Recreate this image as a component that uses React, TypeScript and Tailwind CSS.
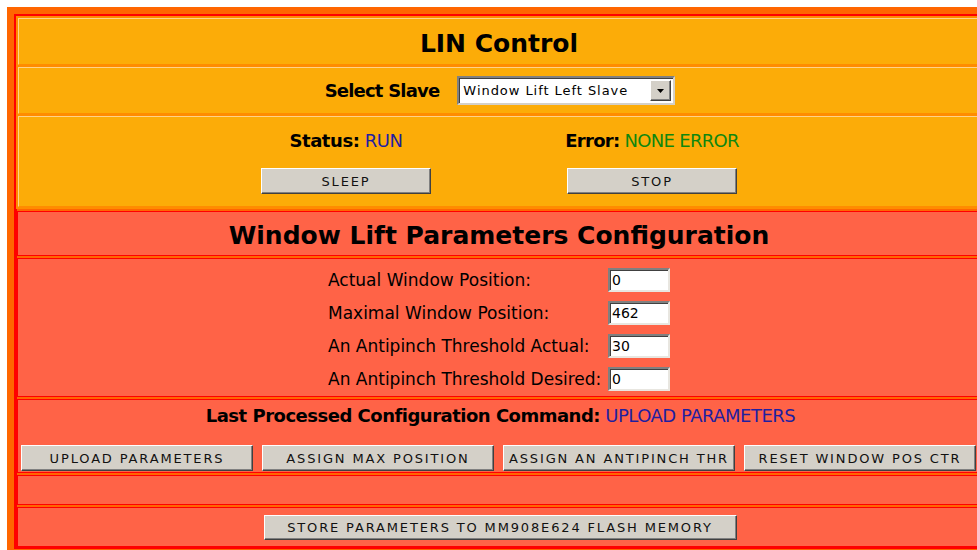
import type { ReactNode } from "react"

const slaves = ["Window Lift Left Slave", "Window Lift Right Slave"]

const params = [
  { label: "Actual Window Position:", value: "0" },
  { label: "Maximal Window Position:", value: "462" },
  { label: "An Antipinch Threshold Actual:", value: "30" },
  { label: "An Antipinch Threshold Desired:", value: "0" },
]

const commands = ["UPLOAD PARAMETERS", "ASSIGN MAX POSITION", "ASSIGN AN ANTIPINCH THR", "RESET WINDOW POS CTR"]

function Button({ children, className = "" }: { children: ReactNode; className?: string }) {
  return (
    <button
      className={`flex items-center justify-center px-0 whitespace-nowrap bg-[#D4D0C8] border border-t-white border-l-white border-r-[#404040] border-b-[#404040] shadow-[inset_-1px_-1px_0_#808080] text-[13px] tracking-[1.85px] text-[#111] leading-none ${className}`}
    >
      {children}
    </button>
  )
}

function Field({ value }: { value: string }) {
  return (
    <div className="w-[62px] h-[24px] bg-white border-2 border-t-[#808080] border-l-[#808080] border-b-[#E8E6E0] border-r-[#E8E6E0] shadow-[inset_1px_1px_0_#404040] flex items-center pl-[2px] text-[14px] leading-none">
      {value}
    </div>
  )
}

function YellowRow({ children, className = "" }: { children: ReactNode; className?: string }) {
  return (
    <div
      className={`bg-[#FCAC08] border border-t-[#FFD28A] border-l-[#FFD28A] border-b-[#FF8C00] border-r-[#FF8C00] ${className}`}
    >
      {children}
    </div>
  )
}

function RedRow({ children, className = "" }: { children: ReactNode; className?: string }) {
  return (
    <div className="border-t-2 border-[#FF6600]">
      <div className={`bg-[#FF6347] border border-[#FF0000] ${className}`}>{children}</div>
    </div>
  )
}

export default function App() {
  return (
    <div className="w-[977px] h-[550px] overflow-hidden bg-white pt-[7px] pl-[7px] font-['DejaVu_Sans',sans-serif] text-black">
      <div className="w-[984px] border-[7px] border-[#FF6600] bg-[#FF0000] p-[2px]">
        {/* LIN master controls */}
        <div className="bg-[#FF8C00] p-[2px] flex flex-col gap-[2px]">
          <YellowRow className="h-[47px] flex items-center justify-center">
            <h1 className="text-[25px] font-bold leading-none pt-[3px]">LIN Control</h1>
          </YellowRow>
          <YellowRow className="h-[47px] flex items-center justify-center gap-[18px]">
            <span className="text-[18px] font-bold tracking-[-0.8px] pl-[2px]">Select Slave</span>
            <div className="w-[218px] h-[29px] bg-white border-2 border-t-[#808080] border-l-[#808080] border-b-[#D4D0C8] border-r-[#D4D0C8] shadow-[inset_1px_1px_0_#404040] flex items-center justify-between pl-[4px] pr-[2px]">
              <span className="text-[13px] tracking-[0.95px]">{slaves[0]}</span>
              <span className="w-[21px] h-[21px] bg-[#D4D0C8] border border-t-white border-l-white border-r-[#404040] border-b-[#404040] shadow-[inset_-1px_-1px_0_#808080] flex items-center justify-center">
                <svg width="7" height="4" viewBox="0 0 7 4">
                  <path d="M0 0h7L3.5 4z" fill="#000" />
                </svg>
              </span>
            </div>
          </YellowRow>
          <YellowRow className="h-[91px] flex justify-center">
            <div className="w-[612px] grid grid-cols-2 pt-[13px]">
              <div className="flex flex-col items-center">
                <div className="text-[18px] leading-[22px] tracking-[-0.45px]">
                  <span className="font-bold">Status:</span> <span className="text-[#1F1FA0]">RUN</span>
                </div>
                <Button className="mt-[16px] w-[170px] h-[26px]">SLEEP</Button>
              </div>
              <div className="flex flex-col items-center">
                <div className="text-[18px] leading-[22px] tracking-[-0.7px]">
                  <span className="font-bold">Error:</span> <span className="text-[#0F870F]">NONE ERROR</span>
                </div>
                <Button className="mt-[16px] w-[170px] h-[26px]">STOP</Button>
              </div>
            </div>
          </YellowRow>
        </div>

        {/* window lift parameter block */}
        <div className="bg-[#FF0000] px-[1px]">
          <RedRow className="h-[45px] flex items-center justify-center">
            <h2 className="text-[25px] font-bold leading-none pt-[3px]">Window Lift Parameters Configuration</h2>
          </RedRow>
          <RedRow className="h-[139px] flex justify-center pt-[9px]">
            <div className="flex flex-col gap-[9px]">
              {params.map((p) => (
                <div key={p.label} className="flex items-center">
                  <span className="w-[280px] text-[17px] leading-none">{p.label}</span>
                  <Field value={p.value} />
                </div>
              ))}
            </div>
          </RedRow>
          <RedRow className="h-[74px] pt-[5px] pl-[3px]">
            <div className="text-center text-[18px] leading-[22px] tracking-[-0.5px]">
              <span className="font-bold">Last Processed Configuration Command:</span>{" "}
              <span className="text-[#1F1FA0]">UPLOAD PARAMETERS</span>
            </div>
            <div className="mt-[18px] grid grid-cols-[repeat(4,232px)] gap-[9px]">
              {commands.map((c) => (
                <Button key={c} className="h-[26px]">
                  {c}
                </Button>
              ))}
            </div>
          </RedRow>
          <RedRow className="h-[30px]">
            <span />
          </RedRow>
          <RedRow className="h-[40px] flex items-center justify-center">
            <Button className="w-[473px] h-[25px] ml-[2px]">STORE PARAMETERS TO MM908E624 FLASH MEMORY</Button>
          </RedRow>
        </div>
      </div>
    </div>
  )
}
